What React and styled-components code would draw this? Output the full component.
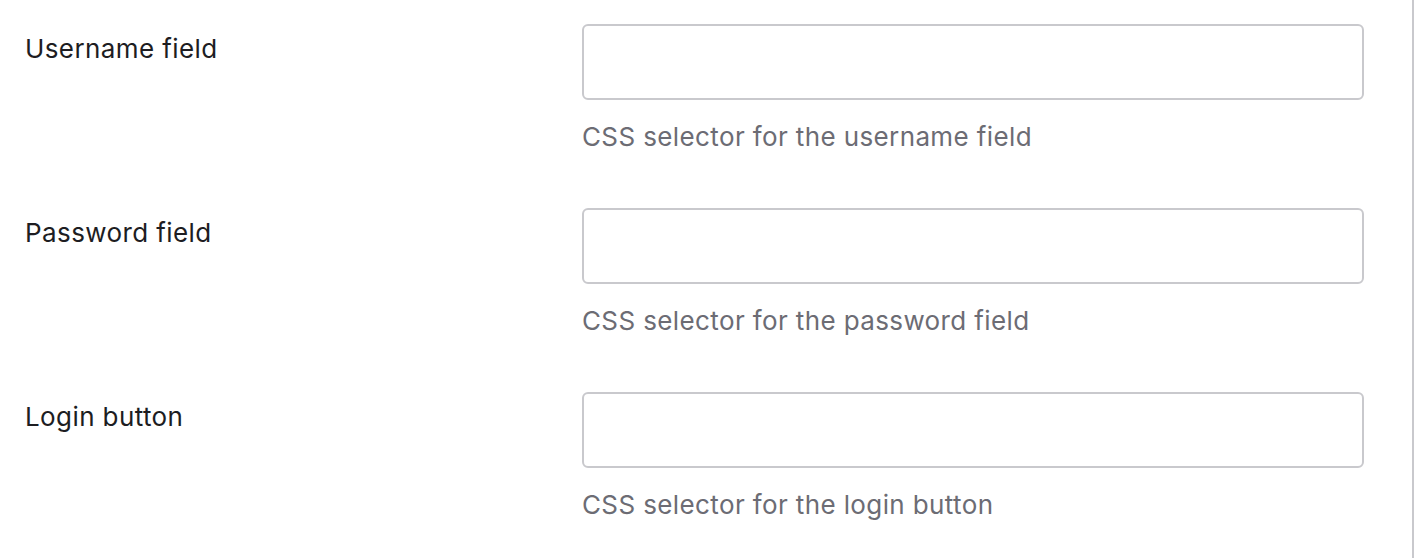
import React from 'react';
import styled, { createGlobalStyle } from 'styled-components';

const GlobalStyle = createGlobalStyle`
  html, body {
    margin: 0;
    padding: 0;
    background: #ffffff;
  }
  body {
    font-family: Inter, "Liberation Sans", sans-serif;
    -webkit-font-smoothing: antialiased;
  }
`;

const fields = [
  { label: 'Username field', help: 'CSS selector for the username field' },
  { label: 'Password field', help: 'CSS selector for the password field' },
  { label: 'Login button', help: 'CSS selector for the login button' },
];

const App = () => {
  return (
    <Page>
      <GlobalStyle />
      <Form>
        {fields.map(field => (
          <Row key={field.label}>
            <Label>{field.label}</Label>
            <Control>
              <Input type="text" aria-label={field.label} />
              <Help>{field.help}</Help>
            </Control>
          </Row>
        ))}
      </Form>
    </Page>
  );
};

const Page = styled.div`
  display: flex;
  width: 1416px;
  height: 558px;
  overflow: hidden;
  background: #ffffff;
`;

const Form = styled.div`
  display: flex;
  flex-direction: column;
  flex-shrink: 0;
  width: 1414px;
  height: 558px;
  box-sizing: border-box;
  padding-top: 24px;
  border-right: 2px solid #c9c9cd;
`;

const Row = styled.div`
  display: grid;
  grid-template-columns: 557px 782px;
  flex-shrink: 0;
  padding-left: 25px;
  height: 184px;
`;

const Label = styled.div`
  padding-top: 9px;
  font-size: 26px;
  line-height: 32px;
  letter-spacing: 0.4px;
  color: #1d1d22;
`;

const Control = styled.div`
  display: flex;
  flex-direction: column;
`;

const Input = styled.input`
  box-sizing: border-box;
  width: 782px;
  height: 76px;
  margin: 0;
  border: 2px solid #c9c9cd;
  border-radius: 6px;
  background: #ffffff;
  outline: none;
`;

const Help = styled.div`
  margin-top: 21px;
  font-size: 26px;
  line-height: 32px;
  letter-spacing: 0.38px;
  color: #6c6c74;
`;

export default App;
